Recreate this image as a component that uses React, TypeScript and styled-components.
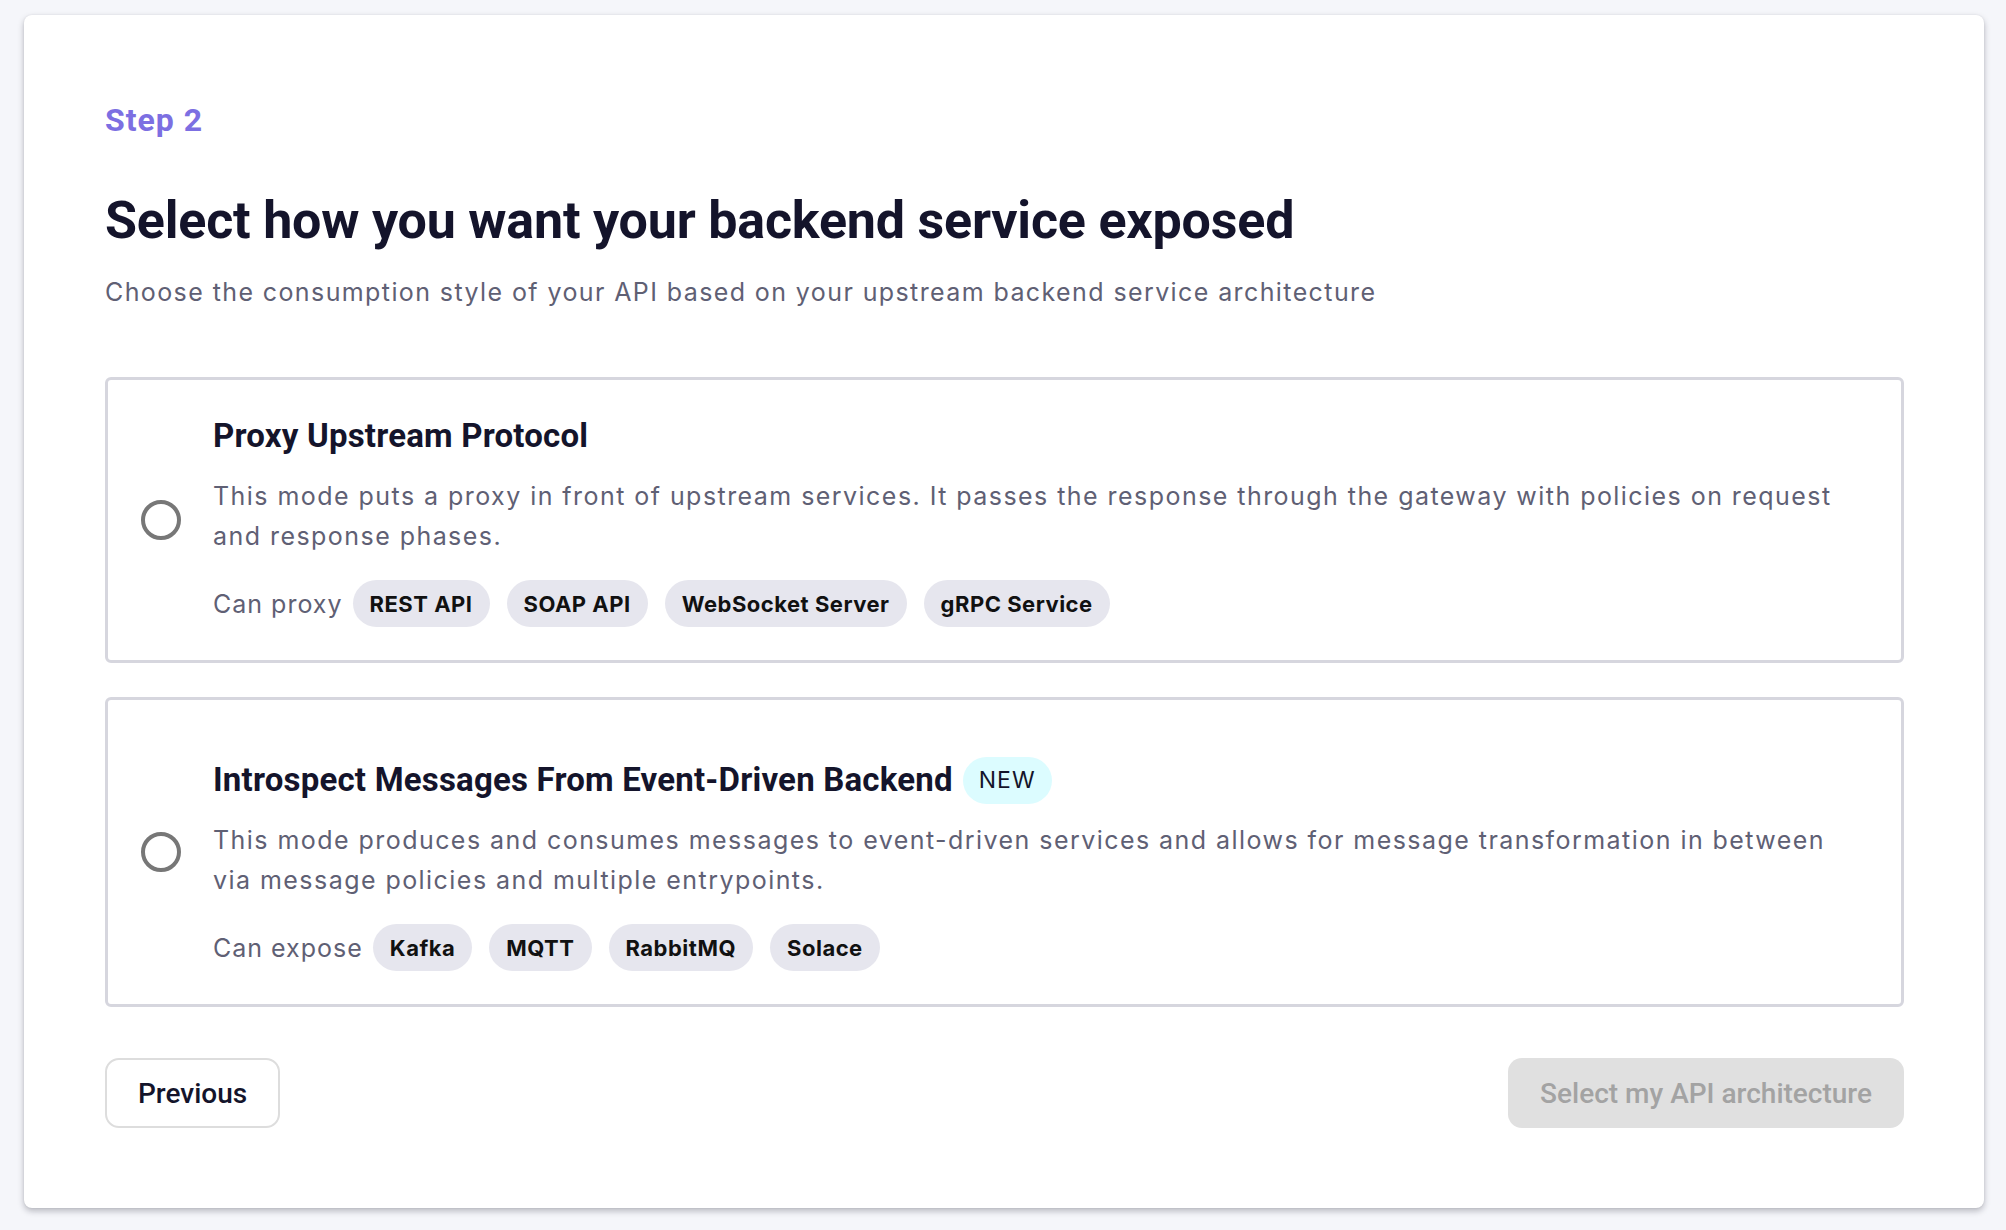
import React from "react";
import styled, { createGlobalStyle } from "styled-components";

const GlobalStyle = createGlobalStyle`
  html, body { margin: 0; padding: 0; background: #f5f6fa; }
  * { box-sizing: border-box; }
`;

const Page = styled.div`
  padding: 15px 22px 23px 24px;
  font-family: Inter, "Liberation Sans", sans-serif;
`;

const Panel = styled.div`
  background: #ffffff;
  border-radius: 8px;
  box-shadow: 0 3px 6px rgba(20, 20, 40, 0.28), 0 0 2px rgba(20, 20, 40, 0.08);
  padding: 86px 80px 80px 81px;
  display: flex;
  flex-direction: column;
`;

const StepLabel = styled.div`
  font-family: Roboto, "Liberation Sans", sans-serif;
  font-weight: 700;
  font-size: 32px;
  line-height: 38px;
  letter-spacing: 1px;
  color: #7c6fe2;
`;

const Heading = styled.h1`
  margin: 52px 0 0;
  font-family: Roboto, "Liberation Sans", sans-serif;
  font-weight: 700;
  font-size: 52px;
  line-height: 60px;
  letter-spacing: -0.2px;
  color: #14142b;
`;

const Subtitle = styled.p`
  margin: 25px 0 0;
  font-size: 25px;
  line-height: 32px;
  letter-spacing: 1.4px;
  color: #5f6074;
`;

const Options = styled.div`
  margin-top: 69px;
  display: flex;
  flex-direction: column;
  gap: 34px;
`;

const OptionCard = styled.label`
  display: flex;
  align-items: center;
  gap: 32px;
  border: 3px solid #d6d6de;
  border-radius: 6px;
  padding: 33px 50px 33px 33px;
  cursor: pointer;
`;

const Radio = styled.span`
  flex: none;
  width: 40px;
  height: 40px;
  border-radius: 50%;
  border: 4px solid #777777;
`;

const OptionBody = styled.div<{ $offset: number }>`
  flex: 1;
  display: flex;
  flex-direction: column;
  padding-top: ${(p) => p.$offset}px;
`;

const TitleRow = styled.div`
  display: flex;
  align-items: center;
  gap: 10px;
  height: 36px;
`;

const OptionTitle = styled.h2`
  margin: 0;
  font-family: Roboto, "Liberation Sans", sans-serif;
  font-weight: 700;
  font-size: 33px;
  line-height: 36px;
  letter-spacing: 0.2px;
  color: #14142b;
`;

const NewBadge = styled.span`
  display: inline-flex;
  align-items: center;
  height: 47px;
  padding: 0 16px;
  border-radius: 24px;
  background: #dcfcff;
  color: #14142b;
  font-size: 23px;
  letter-spacing: 1px;
`;

const Description = styled.p`
  margin: 22px 0 0;
  font-size: 25px;
  line-height: 40px;
  letter-spacing: 1.45px;
  color: #5f6074;
`;

const ChipRow = styled.div`
  margin-top: 24px;
  display: flex;
  align-items: center;
  gap: 17px;
`;

const ChipLead = styled.span`
  font-size: 25px;
  letter-spacing: 1px;
  color: #5f6074;
  margin-right: -7px;
`;

const Chip = styled.span`
  display: inline-flex;
  align-items: center;
  height: 47px;
  padding: 0 17px;
  border-radius: 24px;
  background: #e6e6ee;
  color: #111111;
  font-size: 22px;
  font-weight: 700;
  letter-spacing: 0.5px;
`;

const Footer = styled.div`
  margin-top: 51px;
  display: flex;
  justify-content: space-between;
  align-items: center;
`;

const Button = styled.button<{ $primary?: boolean }>`
  height: 70px;
  padding: 0 ${(p) => (p.$primary ? 32 : 31)}px;
  border-radius: 14px;
  font-family: Roboto, "Liberation Sans", sans-serif;
  font-size: 28px;
  font-weight: 500;
  border: ${(p) => (p.$primary ? "none" : "2px solid #dddddd")};
  background: ${(p) => (p.$primary ? "#e0e0e0" : "#ffffff")};
  color: ${(p) => (p.$primary ? "#a3a3a3" : "#14142b")};
  cursor: ${(p) => (p.$primary ? "default" : "pointer")};
`;

type Option = {
  title: string;
  isNew?: boolean;
  description: string;
  lead: string;
  chips: string[];
  offset: number;
};

const options: Option[] = [
  {
    title: "Proxy Upstream Protocol",
    description:
      "This mode puts a proxy in front of upstream services. It passes the response through the gateway with policies on request and response phases.",
    lead: "Can proxy",
    chips: ["REST API", "SOAP API", "WebSocket Server", "gRPC Service"],
    offset: 5,
  },
  {
    title: "Introspect Messages From Event-Driven Backend",
    isNew: true,
    description:
      "This mode produces and consumes messages to event-driven services and allows for message transformation in between via message policies and multiple entrypoints.",
    lead: "Can expose",
    chips: ["Kafka", "MQTT", "RabbitMQ", "Solace"],
    offset: 29,
  },
];

export default function App() {
  return (
    <>
      <GlobalStyle />
      <Page>
        <Panel>
          <StepLabel>Step 2</StepLabel>
          <Heading>Select how you want your backend service exposed</Heading>
          <Subtitle>
            Choose the consumption style of your API based on your upstream backend service architecture
          </Subtitle>
          <Options>
            {options.map((o) => (
              <OptionCard key={o.title}>
                <Radio />
                <OptionBody $offset={o.offset}>
                  <TitleRow>
                    <OptionTitle>{o.title}</OptionTitle>
                    {o.isNew && <NewBadge>NEW</NewBadge>}
                  </TitleRow>
                  <Description>{o.description}</Description>
                  <ChipRow>
                    <ChipLead>{o.lead}</ChipLead>
                    {o.chips.map((c) => (
                      <Chip key={c}>{c}</Chip>
                    ))}
                  </ChipRow>
                </OptionBody>
              </OptionCard>
            ))}
          </Options>
          <Footer>
            <Button>Previous</Button>
            <Button $primary disabled>
              Select my API architecture
            </Button>
          </Footer>
        </Panel>
      </Page>
    </>
  );
}
